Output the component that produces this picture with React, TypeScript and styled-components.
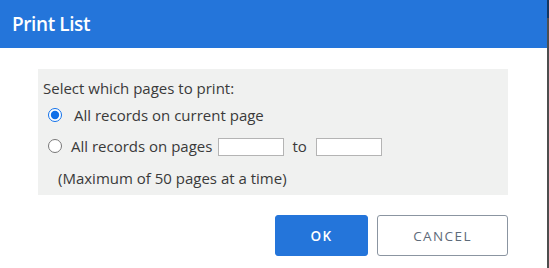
import styled, { createGlobalStyle } from "styled-components";

const GlobalStyle = createGlobalStyle`
  html, body {
    margin: 0;
    padding: 0;
    background: #ffffff;
  }
  body {
    font-family: "Open Sans", "Liberation Sans", sans-serif;
    color: #333333;
  }
`;

const Screen = styled.div`
  display: flex;
  width: 549px;
  height: 268px;
  overflow: hidden;
`;

const Dialog = styled.div`
  width: 547px;
  height: 268px;
  background: #ffffff;
  display: flex;
  flex-direction: column;
`;

const Backdrop = styled.div`
  flex: 1;
  background: linear-gradient(#16365e 0 18px, #4e4e4e 18px);
`;

const Header = styled.div`
  height: 48px;
  background: #2475da;
  color: #ffffff;
  display: flex;
  align-items: center;
  padding-left: 12px;
  font-size: 19px;
  font-weight: 600;
  letter-spacing: -0.4px;
`;

const Body = styled.div`
  padding: 21px 39px 0 38px;
`;

const Panel = styled.div`
  background: #f0f1f0;
  padding: 8px 5px 6px;
  font-size: 15px;
  color: #3a3a3a;
`;

const Caption = styled.div`
  line-height: 22px;
`;

const OptionRow = styled.label<{ $height: number }>`
  display: flex;
  align-items: center;
  height: ${(p) => p.$height}px;
`;

const Radio = styled.input.attrs({ type: "radio" })`
  width: 14px;
  height: 14px;
  margin: 0 0 0 5px;
  accent-color: #0f6fe8;
`;

const OptionText = styled.span<{ $indent: number }>`
  margin-left: ${(p) => p.$indent}px;
`;

const PageBox = styled.input.attrs({ type: "text" })`
  width: 66px;
  height: 18px;
  box-sizing: border-box;
  border: 1px solid #b4b4b4;
  background: #ffffff;
  margin: 2px 0 0;
  padding: 0;
`;

const Between = styled.span`
  margin: 0 9px 0 8px;
`;

const Note = styled.div`
  margin-top: 5px;
  padding-left: 15px;
  line-height: 22px;
`;

const Actions = styled.div`
  display: flex;
  justify-content: flex-end;
  gap: 9px;
  padding: 20px 39px 0 0;
`;

const Button = styled.button<{ $primary?: boolean }>`
  height: 41px;
  width: ${(p) => (p.$primary ? 93 : 131)}px;
  border-radius: 3px;
  font-family: "Open Sans", "Liberation Sans", sans-serif;
  font-size: 13.5px;
  letter-spacing: 1.4px;
  cursor: pointer;
  font-weight: ${(p) => (p.$primary ? 600 : 400)};
  background: ${(p) => (p.$primary ? "#2475da" : "#ffffff")};
  color: ${(p) => (p.$primary ? "#ffffff" : "#5e6b7a")};
  border: 1px solid ${(p) => (p.$primary ? "#2475da" : "#8b95a1")};
`;

export default function App() {
  return (
    <>
      <GlobalStyle />
      <Screen>
        <Dialog>
          <Header>Print List</Header>
          <Body>
            <Panel>
              <Caption>Select which pages to print:</Caption>
              <OptionRow $height={31}>
                <Radio name="pages" defaultChecked />
                <OptionText $indent={12}>All records on current page</OptionText>
              </OptionRow>
              <OptionRow $height={32}>
                <Radio name="pages" />
                <OptionText $indent={9}>All records on pages</OptionText>
                <PageBox style={{ marginLeft: 6 }} />
                <Between>to</Between>
                <PageBox />
              </OptionRow>
              <Note>(Maximum of 50 pages at a time)</Note>
            </Panel>
          </Body>
          <Actions>
            <Button $primary>OK</Button>
            <Button>CANCEL</Button>
          </Actions>
        </Dialog>
        <Backdrop />
      </Screen>
    </>
  );
}
